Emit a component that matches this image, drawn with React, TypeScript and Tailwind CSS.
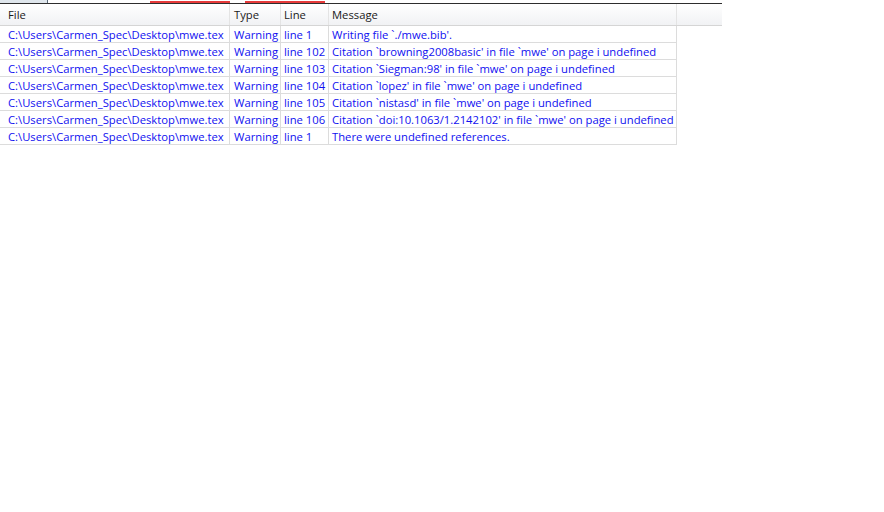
import React from "react";

const rows = [
  ["line 1", "Writing file `./mwe.bib'."],
  ["line 102", "Citation `browning2008basic' in file `mwe' on page i undefined"],
  ["line 103", "Citation `Siegman:98' in file `mwe' on page i undefined"],
  ["line 104", "Citation `lopez' in file `mwe' on page i undefined"],
  ["line 105", "Citation `nistasd' in file `mwe' on page i undefined"],
  ["line 106", "Citation `doi:10.1063/1.2142102' in file `mwe' on page i undefined"],
  ["line 1", "There were undefined references."],
];

export default function App() {
  return (
    <div
      className="w-[884px] h-[512px] bg-white overflow-hidden text-[11.25px] leading-none"
      style={{ fontFamily: '"Open Sans", "Noto Sans", sans-serif' }}
    >
      <div className="h-[3px] flex">
        <div className="w-[48px] h-full bg-[#dfe6ec] border-r border-[#5a6a7a]" />
        <div className="w-[102px]" />
        <div className="w-[80px] h-[2px] mt-[1px] bg-[#e63a3a]" />
        <div className="w-[15px]" />
        <div className="w-[80px] h-[2px] mt-[1px] bg-[#e63a3a]" />
      </div>
      <div className="w-[722px] h-[1px] bg-[#2d2d2d]" />
      <div className="w-[722px] h-[22px] flex bg-gradient-to-b from-white to-[#f1f2f4] border-b border-[#d5d5d5] text-[#1a1a1a]">
        <div className="w-[230px] pl-[8px] pt-[1px] flex items-center border-r border-[#e4e4e4]">File</div>
        <div className="w-[51px] pl-[4px] pt-[1px] flex items-center border-r border-[#e4e4e4]">Type</div>
        <div className="w-[48px] pl-[3px] pt-[1px] flex items-center border-r border-[#e4e4e4]">Line</div>
        <div className="w-[348px] pl-[3px] pt-[1px] flex items-center border-r border-[#e4e4e4]">Message</div>
        <div className="flex-1" />
      </div>
      <div className="w-[677px] text-[#1010f0]">
        {rows.map(([line, msg], i) => (
          <div key={i} className="h-[17px] flex border-b border-[#dcdcdc]">
            <div className="w-[230px] pl-[8px] pt-[1px] flex items-center border-r border-[#dcdcdc] whitespace-nowrap">
              C:\Users\Carmen_Spec\Desktop\mwe.tex
            </div>
            <div className="w-[51px] pl-[4px] pt-[1px] flex items-center border-r border-[#dcdcdc]">Warning</div>
            <div className="w-[48px] pl-[3px] pt-[1px] flex items-center border-r border-[#dcdcdc]">{line}</div>
            <div className="w-[348px] pl-[3px] pt-[1px] flex items-center border-r border-[#dcdcdc] whitespace-nowrap">{msg}</div>
          </div>
        ))}
      </div>
    </div>
  );
}
